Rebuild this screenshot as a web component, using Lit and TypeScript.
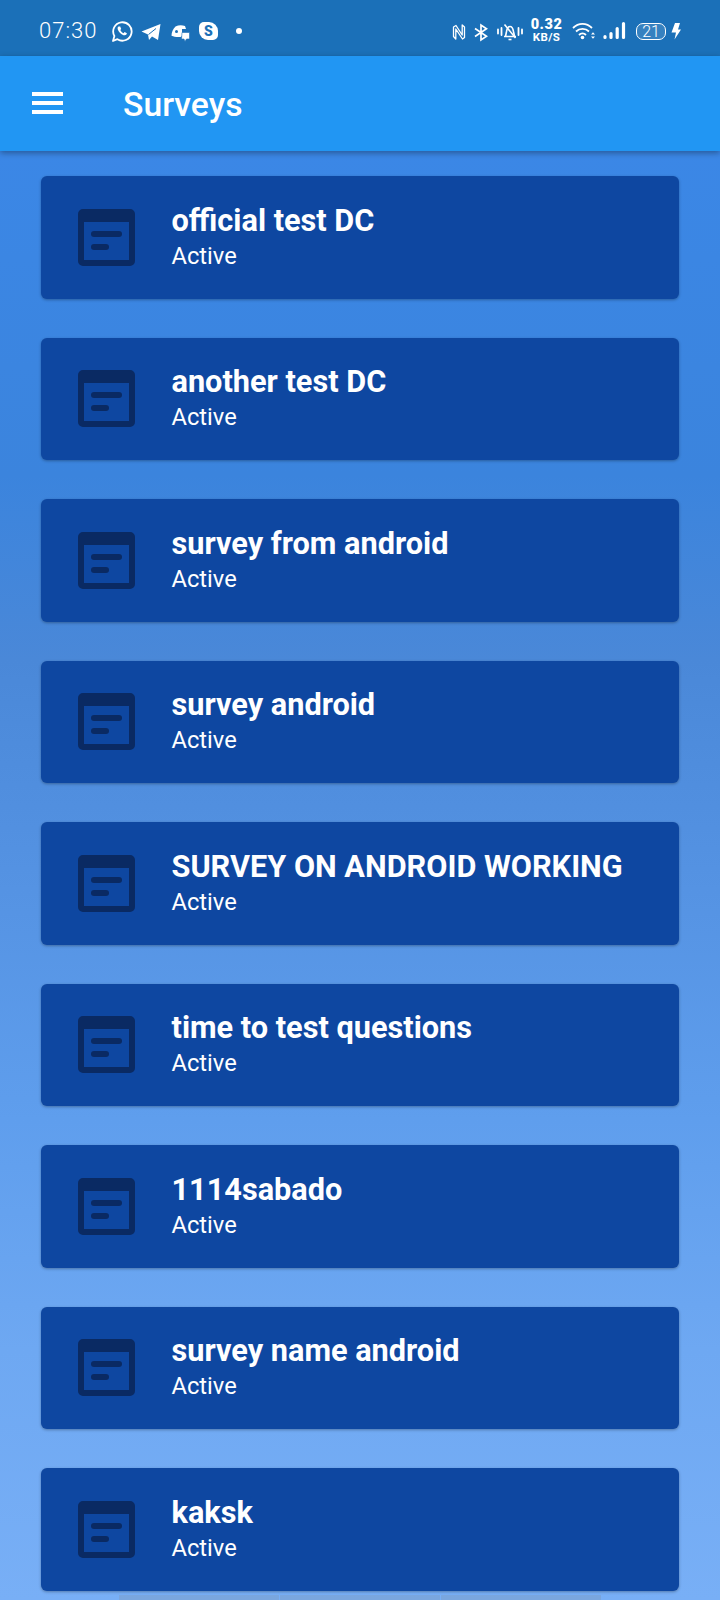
import { LitElement, html, css, svg } from 'lit';
import { customElement } from 'lit/decorators.js';

const SURVEYS = [
  'official test DC',
  'another test DC',
  'survey from android',
  'survey android',
  'SURVEY ON ANDROID WORKING',
  'time to test questions',
  '1114sabado',
  'survey name android',
  'kaksk',
];

const BAR = '#1b70b8';

// every status icon is 22px tall, so they all share one centre line
const ic = (cls: string, w: number, body: unknown) =>
  html`<svg class=${cls} width=${w} height="22" viewBox="0 0 ${w} 22" fill="none">${body}</svg>`;

// status bar, left group
const whatsapp = ic('wa', 22, svg`
  <path d="M2 21l1.400-5A9.200 9.200 0 1 1 6.400 19.200z" stroke="#fff" stroke-width="1.800" stroke-linejoin="round"/>
  <path d="M7.500 6.600c-.9.700-1.100 1.800-.6 3.100 1 2.500 3 4.500 5.600 5.500 1.300.4 2.500.1 3.100-.9l.3-1-2.300-1.200-1 1.100c-1.400-.6-2.600-1.800-3.300-3.300l.9-1-1-2.300z" fill="#fff"/>`);
const telegram = ic('tg', 20, svg`
  <path d="M.5 11.500L19.500 4 17 20l-6-3.500L8 20l-1-5.500z" fill="#fff"/>
  <path d="M7.500 14.500L15 8.500" stroke=${BAR} stroke-width="1"/>`);
const discord = ic('dc', 19, svg`
  <path d="M4.500 6.500C7.500 5 11 5 14 6l1 3H11v7l-1.500 1c-3.500.3-6.500-.1-9-1.200C.5 12.500 2 9 4.500 6.500z" fill="#fff"/>
  <circle cx="5.500" cy="11.500" r="1.500" fill=${BAR}/>
  <path d="M11 12.500h7.500V19h-3l-1.500 2.500-1-2.500h-2.500z" fill="#fff" stroke=${BAR} stroke-width=".6"/>`);
const skype = html`<span class="skype">S</span>`;

// status bar, right group
const nfc = ic('nfc', 14, svg`<path d="M4 5.500L1.500 7v9.500l2.300 2.500V9l6.700 10 2-1.500V7L10.200 5v10z" stroke="#fff" stroke-width="1.300" stroke-linejoin="round"/>`);
const bluetooth = ic('bt', 14, svg`<path d="M1 8.500l11.500 7.700L7 20V5l5.500 3.800L1 16.500" stroke="#fff" stroke-width="1.700"/>`);
const muted = ic('mute', 26, svg`
  <path d="M1 9.500v4M4.500 8v7M21.500 8v7M25 9.500v4" stroke="#fff" stroke-width="1.800" stroke-linecap="round"/>
  <path d="M7 16.500h12M8.500 16.500l1-5c.5-3 1.800-5 3.500-5s3 2 3.500 5l1 5" stroke="#fff" stroke-width="1.600"/>
  <path d="M7.500 4.500l11 13.500" stroke="#fff" stroke-width="1.600"/>
  <path d="M11.500 19.500h3" stroke="#fff" stroke-width="1.600"/>`);
const wifi = ic('wifi', 23, svg`
  <path d="M1 8c5.500-5.500 13.500-5.500 19 0M4 11.500c3.500-3.500 9.500-3.500 13 0M7 15c2-2 5-2 7 0" stroke="#fff" stroke-width="1.800"/>
  <circle cx="10.500" cy="17.500" r="1.800" fill="#fff"/>
  <path d="M19 14.500l2-2.200 2 2.200zM19 16.500l2 2.200 2-2.200z" fill="#fff"/>`);
const signal = ic('signal', 23, svg`<path d="M2 16.500v1M8 13.500v4M14.200 8.500v9M20.500 3.500v14" stroke="#fff" stroke-width="3.200" stroke-linecap="round"/>`);
const bolt = ic('bolt', 10, svg`<path d="M4 3h5L7 9.500h3L3.500 19.500 5 12.500H.5z" fill="#fff"/>`);

const formIcon = html`<svg class="form" width="57" height="57" viewBox="0 0 57 57">
  <path fill-rule="evenodd" d="M5 0h47a5 5 0 0 1 5 5v47a5 5 0 0 1-5 5H5a5 5 0 0 1-5-5V5a5 5 0 0 1 5-5zM6 13v38h45V13z" fill="#0a2a63"/>
  <rect x="13" y="22" width="31" height="6" rx="3" fill="#0a2a63"/>
  <rect x="13" y="35" width="18" height="6" rx="3" fill="#0a2a63"/>
</svg>`;

@customElement('app-root')
export class AppRoot extends LitElement {
  static styles = css`
    :host {
      display: block;
      position: relative;
      width: 720px;
      height: 1600px;
      overflow: hidden;
      font-family: Roboto, 'Liberation Sans', sans-serif;
      color: #fff;
      background: linear-gradient(180deg,
        #3b87e6 151px,
        #3b84dd 475px,
        #4a88d8 660px,
        #5593e3 890px,
        #5f9eed 1120px,
        #6ea8f2 1350px,
        #78aff6 1600px);
    }

    .status {
      height: 56px;
      background: #1b70b8;
      display: flex;
      align-items: center;
      justify-content: space-between;
      padding: 6px 39px 0 39px;
      box-sizing: border-box;
    }

    .group {
      display: flex;
      align-items: center;
    }

    .group svg { flex: none; }

    .time {
      width: 72px;
      font-size: 22px;
      letter-spacing: 1px;
      font-weight: 300;
      margin-top: -1px;
    }

    .tg { margin-left: 8px; }
    .dc { margin-left: 10px; }
    .bt { margin-left: 8px; }
    .mute { margin-left: 9px; }
    .wifi { margin-left: 10px; }
    .signal { margin-left: 8px; }
    .bolt { margin-left: 5px; }

    .skype {
      width: 19px;
      height: 18px;
      margin-left: 9px;
      border-radius: 5px 9px 5px 9px;
      background: #fff;
      color: #1b70b8;
      font-size: 14px;
      font-weight: 900;
      display: flex;
      align-items: center;
      justify-content: center;
    }

    .dot {
      width: 6px;
      height: 6px;
      border-radius: 50%;
      background: #fff;
      margin-left: 18px;
    }

    .speed {
      width: 31px;
      margin-left: 8px;
      display: flex;
      flex-direction: column;
      align-items: center;
      font-weight: 700;
    }

    .speed b { font-size: 14.5px; line-height: 12px; letter-spacing: 0.5px; }
    .speed i { font-size: 11.5px; line-height: 12px; font-style: normal; letter-spacing: 0.4px; }

    .battery {
      width: 30px;
      height: 17px;
      margin-left: 10px;
      border: 1.5px solid #fff;
      border-radius: 7px;
      background: rgba(255, 255, 255, 0.12);
      font-size: 16px;
      box-sizing: border-box;
      display: flex;
      align-items: center;
      justify-content: center;
      font-weight: 300;
    }

    .appbar {
      height: 95px;
      background: #2196f3;
      display: flex;
      align-items: center;
      padding-left: 32px;
      box-shadow: 0 2px 6px rgba(0, 0, 0, 0.35);
      position: relative;
    }

    .menu {
      display: flex;
      flex-direction: column;
      gap: 5px;
      width: 31px;
      margin-right: 60px;
      margin-top: -2px;
    }

    .menu span {
      height: 4px;
      background: #fff;
    }

    .title {
      font-size: 33.7px;
      font-weight: 500;
      margin-top: 1px;
    }

    .list {
      display: flex;
      flex-direction: column;
      gap: 39px;
      padding: 25px 41px 0;
    }

    .card {
      height: 122.5px;
      flex: none;
      border-radius: 6px;
      background: #0e47a1;
      box-shadow: 0 1px 3px rgba(0, 0, 0, 0.3);
      display: flex;
      align-items: center;
      padding-left: 37px;
    }

    .form { flex: none; }

    .text {
      margin-left: 36.5px;
      margin-top: 1px;
    }

    .name {
      font-size: 30.7px;
      font-weight: 700;
      line-height: 36px;
    }

    .sub {
      font-size: 23.7px;
      line-height: 34px;
      font-weight: 400;
    }

    /* faint panels peeking in at the very bottom edge */
    .peek {
      position: absolute;
      left: 119px;
      bottom: 0;
      display: flex;
      gap: 1px;
    }

    .peek span {
      width: 160px;
      height: 5px;
      background: rgba(128, 128, 128, 0.2);
    }
  `;

  render() {
    return html`
      <div class="status">
        <div class="group">
          <span class="time">07:30</span>
          ${whatsapp}${telegram}${discord}${skype}
          <span class="dot"></span>
        </div>
        <div class="group">
          ${nfc}${bluetooth}${muted}
          <div class="speed"><b>0.32</b><i>KB/S</i></div>
          ${wifi}${signal}
          <div class="battery">21</div>
          ${bolt}
        </div>
      </div>
      <div class="appbar">
        <div class="menu"><span></span><span></span><span></span></div>
        <div class="title">Surveys</div>
      </div>
      <div class="list">
        ${SURVEYS.map(name => html`
          <div class="card">
            ${formIcon}
            <div class="text">
              <div class="name">${name}</div>
              <div class="sub">Active</div>
            </div>
          </div>
        `)}
      </div>
      <div class="peek"><span></span><span></span><span></span></div>
    `;
  }
}
